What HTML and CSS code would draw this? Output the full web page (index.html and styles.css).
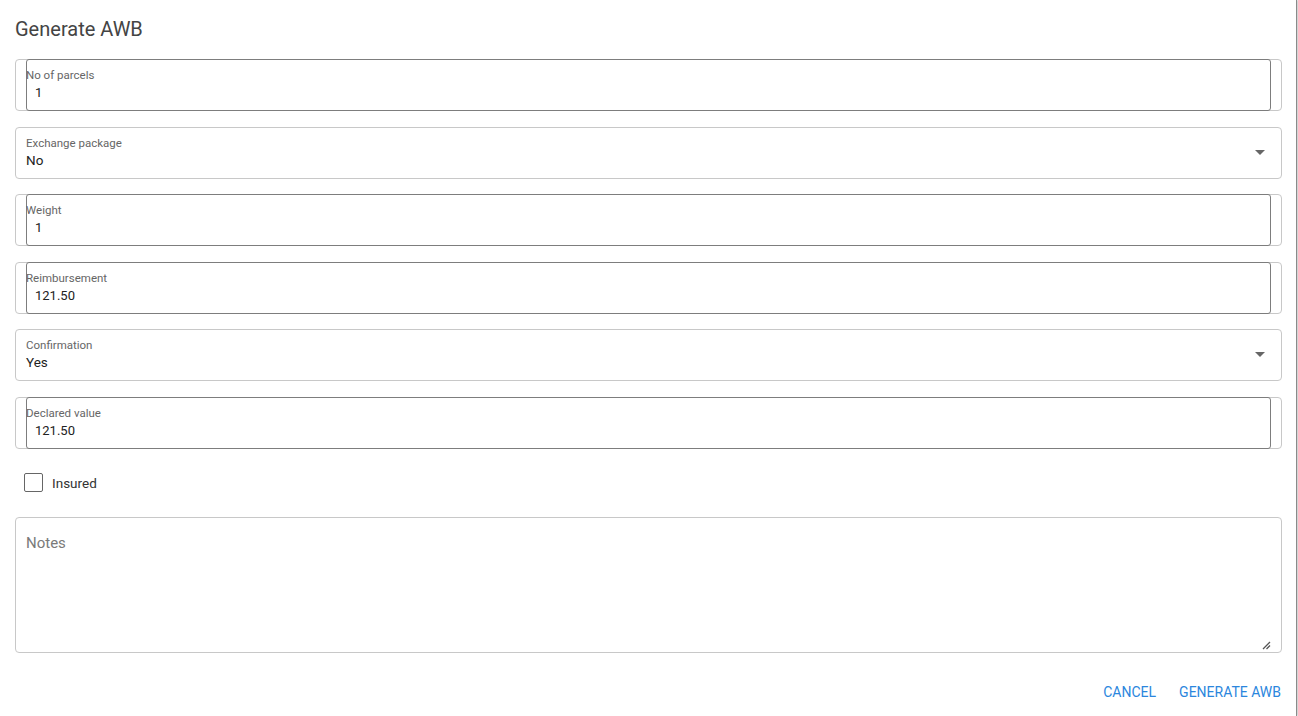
FILE: index.html
```html
<!DOCTYPE html>
<html lang="en">
<head>
    <meta charset="UTF-8">
    <meta name="viewport" content="width=device-width, initial-scale=1.0">
    <title>Generate AWB</title>
    <link rel="stylesheet" href="styles.css">
</head>
<body>
    <div class="dialog">
        <h2 class="title">Generate AWB</h2>

        <div class="form">
            <div class="field">
                <div class="input-box">
                    <span class="label">No of parcels</span>
                    <span class="value">1</span>
                </div>
            </div>

            <div class="field select">
                <span class="label">Exchange package</span>
                <span class="value">No</span>
                <span class="arrow"></span>
            </div>

            <div class="field">
                <div class="input-box">
                    <span class="label">Weight</span>
                    <span class="value">1</span>
                </div>
            </div>

            <div class="field">
                <div class="input-box">
                    <span class="label">Reimbursement</span>
                    <span class="value">121.50</span>
                </div>
            </div>

            <div class="field select">
                <span class="label">Confirmation</span>
                <span class="value">Yes</span>
                <span class="arrow"></span>
            </div>

            <div class="field">
                <div class="input-box">
                    <span class="label">Declared value</span>
                    <span class="value">121.50</span>
                </div>
            </div>

            <label class="check-row">
                <span class="checkbox"></span>
                Insured
            </label>

            <div class="notes">
                <span class="placeholder">Notes</span>
                <svg class="grip" width="9" height="9" viewBox="0 0 9 9">
                    <path d="M1 8 L8 1 M4.5 8 L8 4.5" stroke="#555" stroke-width="1.3"/>
                </svg>
            </div>
        </div>

        <div class="actions">
            <button class="btn">Cancel</button>
            <button class="btn">Generate AWB</button>
        </div>
    </div>
</body>
</html>
```

FILE: styles.css
```css
html, body {
    margin: 0;
    background-color: #fff;
}

body {
    font-family: Roboto, "Liberation Sans", Arial, sans-serif;
    color: #222;
}

.dialog {
    width: 1297px;
    height: 716px;
    box-sizing: border-box;
    border-right: 1px solid #8a8a8a;
    box-shadow: 1px 0 2px rgba(0, 0, 0, 0.25);
    position: relative;
}

.title {
    margin: 0;
    padding: 17px 15px 0;
    font-size: 20px;
    font-weight: 400;
    line-height: 24px;
    color: #444;
}

.form {
    padding: 18px 14px 0 15px;
    display: flex;
    flex-direction: column;
    gap: 15.6px;
}

.field {
    height: 52px;
    box-sizing: border-box;
    border: 1px solid #c8c8c8;
    border-radius: 4px;
}

.input-box {
    height: 52px;
    margin: -1px 10px 0 10px;
    box-sizing: border-box;
    border: 1px solid #7d7d7d;
    border-radius: 3px;
    display: flex;
    flex-direction: column;
    padding-top: 9px;
}

.label {
    font-size: 11.5px;
    line-height: 13px;
    color: #666;
}

.input-box .label {
    margin-left: -1px;
}

.value {
    font-size: 13px;
    line-height: 16px;
    color: #222;
    margin-top: 3px;
}

.input-box .value {
    padding-left: 8px;
}

.select {
    display: flex;
    flex-direction: column;
    padding: 9px 10px 0;
    position: relative;
}

.select .value {
    font-size: 13.5px;
    margin-top: 2px;
}

.arrow {
    position: absolute;
    right: 16px;
    top: 22px;
    border-left: 5px solid transparent;
    border-right: 5px solid transparent;
    border-top: 5px solid #666;
}

.check-row {
    display: flex;
    align-items: center;
    gap: 9px;
    height: 37px;
    padding-bottom: 1px;
    box-sizing: border-box;
    padding-left: 9px;
    font-size: 13.5px;
    color: #333;
}

.checkbox {
    width: 19px;
    height: 19px;
    box-sizing: border-box;
    border: 1.5px solid #666;
    border-radius: 2px;
}

.notes {
    height: 136px;
    box-sizing: border-box;
    border: 1px solid #c8c8c8;
    border-radius: 4px;
    padding: 15px 10px;
    position: relative;
}

.placeholder {
    font-size: 15px;
    color: #7a7a7a;
}

.grip {
    position: absolute;
    right: 10px;
    bottom: 2px;
}

.actions {
    display: flex;
    justify-content: flex-end;
    gap: 7px;
    padding: 27px 7px 0 0;
}

.btn {
    background: none;
    border: none;
    padding: 4px 8px;
    font-family: Roboto, "Liberation Sans", Arial, sans-serif;
    font-size: 14px;
    text-transform: uppercase;
    color: #2b86dd;
    cursor: pointer;
}
```
